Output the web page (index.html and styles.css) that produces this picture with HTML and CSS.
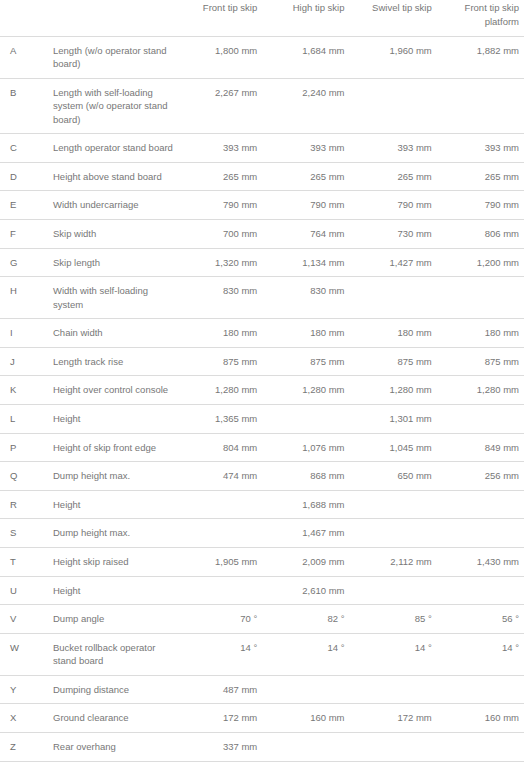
FILE: index.html
```
<!DOCTYPE html>
<html lang="en">
<head>
<meta charset="utf-8">
<title>Dimensions</title>
<link rel="stylesheet" href="styles.css">
</head>
<body>
<table class="spec">
  <colgroup>
    <col class="c-key"><col class="c-label"><col class="c-val"><col class="c-val"><col class="c-val"><col class="c-val">
  </colgroup>
  <thead>
    <tr>
      <th class="key"></th><th class="label"></th>
      <th class="val">Front tip skip</th>
      <th class="val">High tip skip</th>
      <th class="val">Swivel tip skip</th>
      <th class="val">Front tip skip platform</th>
    </tr>
  </thead>
  <tbody>
    <tr><td class="key">A</td><td class="label">Length (w/o operator stand board)</td><td class="val">1,800 mm</td><td class="val">1,684 mm</td><td class="val">1,960 mm</td><td class="val">1,882 mm</td></tr>
    <tr><td class="key">B</td><td class="label">Length with self-loading system (w/o operator stand board)</td><td class="val">2,267 mm</td><td class="val">2,240 mm</td><td class="val"></td><td class="val"></td></tr>
    <tr><td class="key">C</td><td class="label">Length operator stand board</td><td class="val">393 mm</td><td class="val">393 mm</td><td class="val">393 mm</td><td class="val">393 mm</td></tr>
    <tr><td class="key">D</td><td class="label">Height above stand board</td><td class="val">265 mm</td><td class="val">265 mm</td><td class="val">265 mm</td><td class="val">265 mm</td></tr>
    <tr><td class="key">E</td><td class="label">Width undercarriage</td><td class="val">790 mm</td><td class="val">790 mm</td><td class="val">790 mm</td><td class="val">790 mm</td></tr>
    <tr><td class="key">F</td><td class="label">Skip width</td><td class="val">700 mm</td><td class="val">764 mm</td><td class="val">730 mm</td><td class="val">806 mm</td></tr>
    <tr><td class="key">G</td><td class="label">Skip length</td><td class="val">1,320 mm</td><td class="val">1,134 mm</td><td class="val">1,427 mm</td><td class="val">1,200 mm</td></tr>
    <tr><td class="key">H</td><td class="label">Width with self-loading system</td><td class="val">830 mm</td><td class="val">830 mm</td><td class="val"></td><td class="val"></td></tr>
    <tr><td class="key">I</td><td class="label">Chain width</td><td class="val">180 mm</td><td class="val">180 mm</td><td class="val">180 mm</td><td class="val">180 mm</td></tr>
    <tr><td class="key">J</td><td class="label">Length track rise</td><td class="val">875 mm</td><td class="val">875 mm</td><td class="val">875 mm</td><td class="val">875 mm</td></tr>
    <tr><td class="key">K</td><td class="label">Height over control console</td><td class="val">1,280 mm</td><td class="val">1,280 mm</td><td class="val">1,280 mm</td><td class="val">1,280 mm</td></tr>
    <tr><td class="key">L</td><td class="label">Height</td><td class="val">1,365 mm</td><td class="val"></td><td class="val">1,301 mm</td><td class="val"></td></tr>
    <tr><td class="key">P</td><td class="label">Height of skip front edge</td><td class="val">804 mm</td><td class="val">1,076 mm</td><td class="val">1,045 mm</td><td class="val">849 mm</td></tr>
    <tr><td class="key">Q</td><td class="label">Dump height max.</td><td class="val">474 mm</td><td class="val">868 mm</td><td class="val">650 mm</td><td class="val">256 mm</td></tr>
    <tr><td class="key">R</td><td class="label">Height</td><td class="val"></td><td class="val">1,688 mm</td><td class="val"></td><td class="val"></td></tr>
    <tr><td class="key">S</td><td class="label">Dump height max.</td><td class="val"></td><td class="val">1,467 mm</td><td class="val"></td><td class="val"></td></tr>
    <tr><td class="key">T</td><td class="label">Height skip raised</td><td class="val">1,905 mm</td><td class="val">2,009 mm</td><td class="val">2,112 mm</td><td class="val">1,430 mm</td></tr>
    <tr><td class="key">U</td><td class="label">Height</td><td class="val"></td><td class="val">2,610 mm</td><td class="val"></td><td class="val"></td></tr>
    <tr><td class="key">V</td><td class="label">Dump angle</td><td class="val">70 °</td><td class="val">82 °</td><td class="val">85 °</td><td class="val">56 °</td></tr>
    <tr><td class="key">W</td><td class="label">Bucket rollback operator stand board</td><td class="val">14 °</td><td class="val">14 °</td><td class="val">14 °</td><td class="val">14 °</td></tr>
    <tr><td class="key">Y</td><td class="label">Dumping distance</td><td class="val">487 mm</td><td class="val"></td><td class="val"></td><td class="val"></td></tr>
    <tr><td class="key">X</td><td class="label">Ground clearance</td><td class="val">172 mm</td><td class="val">160 mm</td><td class="val">172 mm</td><td class="val">160 mm</td></tr>
    <tr><td class="key">Z</td><td class="label">Rear overhang</td><td class="val">337 mm</td><td class="val"></td><td class="val"></td><td class="val"></td></tr>
  </tbody>
</table>
</body>
</html>
```
FILE: styles.css
```
html, body {
  margin: 0;
  padding: 0;
  background: #fff;
}

body {
  font-family: "Liberation Sans", Arial, sans-serif;
  font-size: 9.5px;
  line-height: 13.5px;
  color: #777;
}

.spec {
  width: 524px;
  table-layout: fixed;
  border-collapse: collapse;
  border-spacing: 0;
}

.c-key { width: 48px; }
.c-label { width: 127px; }
.c-val { width: 87.25px; }

.spec th {
  font-weight: normal;
  vertical-align: top;
  padding: 1px 0 7.5px 0;
  height: 27px;
  border-bottom: 1px solid #dcdcdc;
}

.spec td {
  vertical-align: top;
  padding: 7px 0 7.1px 0;
  border-bottom: 1px solid #dcdcdc;
}

.spec .key {
  padding-left: 10px;
  text-align: left;
  color: #6e6e6e;
}

.spec .label {
  padding-left: 5px;
  padding-right: 1px;
  text-align: left;
}

.spec .val {
  padding-right: 5px;
  text-align: right;
}
```
